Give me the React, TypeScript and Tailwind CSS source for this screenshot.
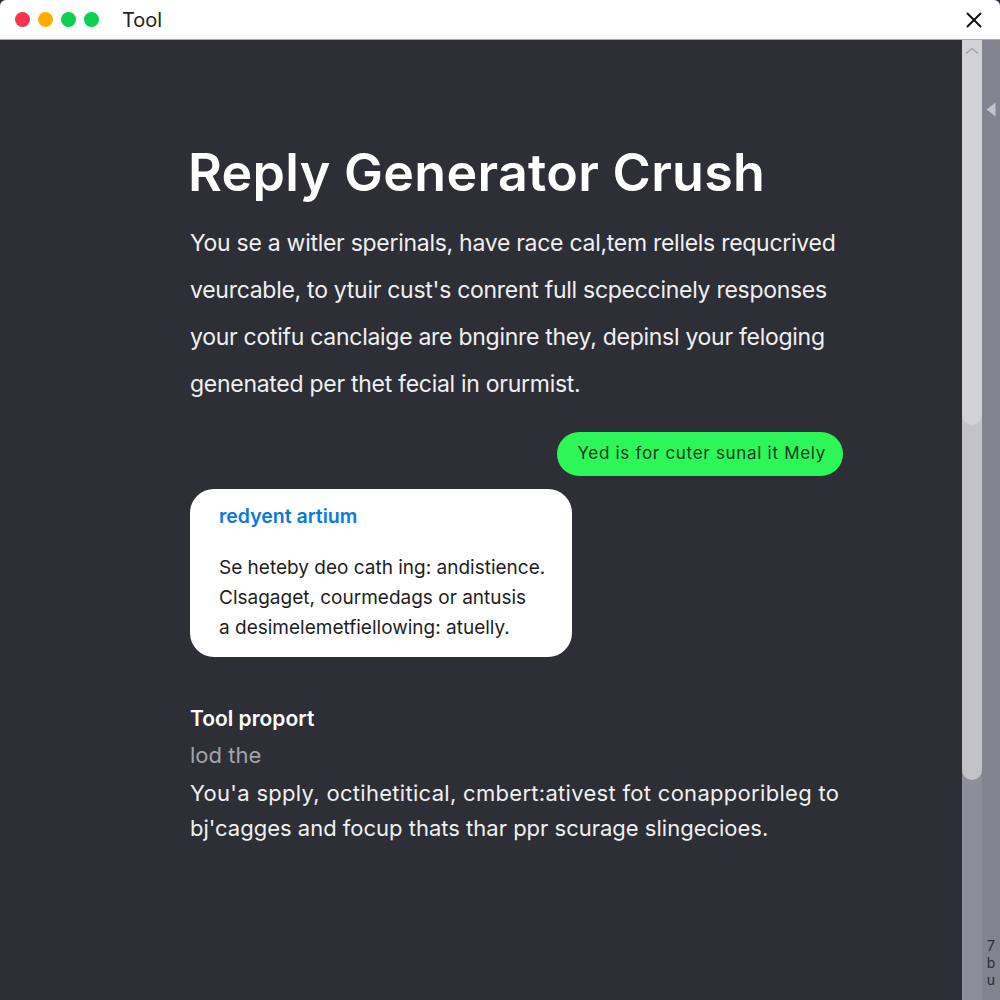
import React from 'react';
import { X } from 'lucide-react';

const intro = [
  'You se a witler sperinals, have race cal,tem rellels requcrived',
  "veurcable, to ytuir cust's conrent full scpeccinely responses",
  'your cotifu canclaige are bnginre they, depinsl your feloging',
  'genenated per thet fecial in orurmist.',
];

const cardLines = [
  'Se heteby deo cath ing: andistience.',
  'Clsagaget, courmedags or antusis',
  'a desimelemetfiellowing: atuelly.',
];

const App = () => {
  return (
    <div className="h-[1000px] w-[1000px] overflow-hidden flex flex-col bg-[#2e2e36] font-['Inter',sans-serif]">
      <header className="h-10 shrink-0 flex items-center bg-white border-b border-[#a9a9ad] rounded-t-md pl-[15px] pr-[13px]">
        <div className="flex gap-[8px]">
          <span className="w-[15px] h-[15px] rounded-full bg-[#f5344d]"></span>
          <span className="w-[15px] h-[15px] rounded-full bg-[#ffae00]"></span>
          <span className="w-[15px] h-[15px] rounded-full bg-[#0bd14f]"></span>
          <span className="w-[15px] h-[15px] rounded-full bg-[#0bd14f]"></span>
        </div>
        <span className="ml-[23px] text-[20px] text-[#222226]">Tool</span>
        <X className="ml-auto text-[#111114]" size={26} strokeWidth={1.8} />
      </header>

      <div className="flex flex-1 min-h-0">
        <main className="w-[962px] pl-[190px] pr-[119px] pt-[103px]">
          <h1 className="-ml-[2px] text-[52px] leading-[60px] font-semibold tracking-[0.3px] text-white whitespace-nowrap">Reply Generator Crush</h1>

          <div className="mt-[17px] text-[#f0f0f2] text-[23px] leading-[47px] tracking-[-0.28px]">
            {intro.map((line) => (
              <p key={line} className="whitespace-nowrap">{line}</p>
            ))}
          </div>

          <div className="mt-[24px] flex justify-end">
            <div className="h-11 flex items-center rounded-full bg-[#2df659] pl-5 pr-[17px] text-[17px] tracking-[0.7px] text-[#123a1f] whitespace-nowrap">
              Yed is for cuter sunal it Mely
            </div>
          </div>

          <div className="mt-[13px] w-[382px] h-[168px] rounded-[24px] bg-white pl-[29px] pt-[14px]">
            <p className="text-[19.5px] leading-[26px] font-semibold text-[#0a78dc]">redyent artium</p>
            <div className="mt-[24px] text-[19px] leading-[30px] text-[#1e1e22]">
              {cardLines.map((line) => (
                <p key={line} className="whitespace-nowrap">{line}</p>
              ))}
            </div>
          </div>

          <div className="mt-[48px]">
            <p className="text-[21px] leading-7 font-semibold text-white">Tool proport</p>
            <p className="mt-[8px] text-[22px] leading-7 text-[#a4a4ac]">lod the</p>
            <p className="mt-[10px] text-[22px] leading-7 tracking-[0.3px] text-[#f0f0f2] whitespace-nowrap">You'a spply, octihetitical, cmbert:ativest fot conapporibleg to</p>
            <p className="mt-[7px] text-[22px] leading-7 text-[#f0f0f2] whitespace-nowrap">bj'cagges and focup thats thar ppr scurage slingecioes.</p>
          </div>
        </main>

        {/* scrollbar, lighter thumb sits on top of the darker one */}
        <div className="w-[20px] bg-[#8e8e9a] flex flex-col">
          <div className="h-[740px] rounded-b-[10px] bg-[#c2c2c7]">
            <div className="h-[385px] rounded-b-[10px] bg-[#d2d2d6] flex justify-center pt-[7px]">
              <svg width="14" height="8" viewBox="0 0 14 8" fill="none" stroke="#a5a5ab" strokeWidth="1.5">
                <path d="M1 6.5 7 1.5 13 6.5" />
              </svg>
            </div>
          </div>
        </div>

        <div className="flex-1 bg-[#838390] flex flex-col items-center">
          <svg className="mt-[62px]" width="10" height="15" viewBox="0 0 10 15">
            <path d="M9.5 0.5V14.5L0.5 7.5Z" fill="#c3c3ca" />
          </svg>
          <div className="mt-auto mb-[12px] flex flex-col items-center text-[14px] leading-[17px] text-[#2a2a34]">
            <span>7</span>
            <span>b</span>
            <span>u</span>
          </div>
        </div>
      </div>
    </div>
  );
};

export default App;
